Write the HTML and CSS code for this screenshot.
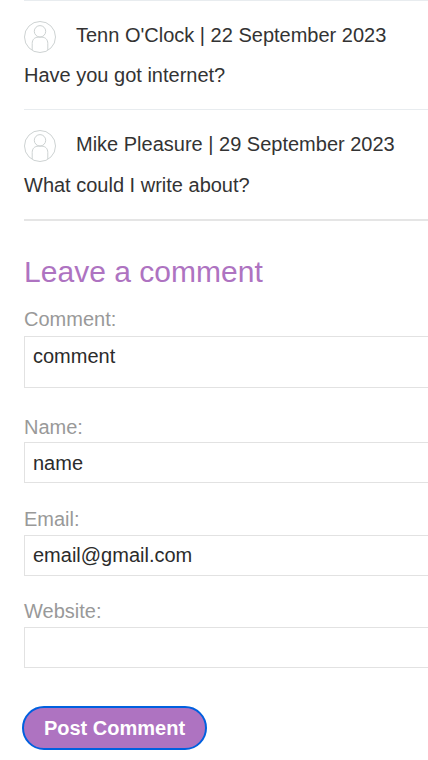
FILE: index.html
```html
<!DOCTYPE html>
<html lang="en">
<head>
<meta charset="utf-8">
<title>Leave a comment</title>
<link rel="stylesheet" href="styles.css">
</head>
<body>
<main>
  <article class="comment">
    <header class="meta">
      <svg class="avatar" viewBox="0 0 32 32"><circle cx="16" cy="16" r="15.5"/><circle cx="16" cy="10.300" r="5.700"/><path d="M8.200 29V22.500c0-4 2.500-6.300 6-6.300h3.600c3.500 0 6 2.300 6 6.300V29"/></svg>
      <span>Tenn O'Clock | 22 September 2023</span>
    </header>
    <p class="text">Have you got internet?</p>
  </article>
  <article class="comment comment-last">
    <header class="meta">
      <svg class="avatar" viewBox="0 0 32 32"><circle cx="16" cy="16" r="15.5"/><circle cx="16" cy="10.300" r="5.700"/><path d="M8.200 29V22.500c0-4 2.500-6.300 6-6.300h3.600c3.500 0 6 2.300 6 6.300V29"/></svg>
      <span>Mike Pleasure | 29 September 2023</span>
    </header>
    <p class="text">What could I write about?</p>
  </article>
  <form class="form">
    <h2>Leave a comment</h2>
    <label for="comment">Comment:</label>
    <textarea id="comment">comment</textarea>
    <label class="label-name" for="name">Name:</label>
    <input class="input-name" id="name" value="name">
    <label for="email">Email:</label>
    <input id="email" value="email@gmail.com">
    <label for="website">Website:</label>
    <input id="website">
    <button type="button">Post Comment</button>
  </form>
</main>
</body>
</html>
```
FILE: styles.css
```css
* { box-sizing: border-box; }
body {
  margin: 0;
  height: 760px;
  overflow: hidden;
  background: #fff;
  color: #333;
  font: 20px/24px "Liberation Sans", Arial, sans-serif;
}
main { padding-left: 24px; }
.comment { height: 109px; border-top: 1px solid #e8ecef; padding-top: 20px; }
.meta { display: flex; align-items: center; gap: 20px; height: 32px; }
.meta span { padding-bottom: 4px; }
.avatar { width: 32px; height: 32px; fill: none; stroke: #cdd2d2; stroke-width: 1; }
.text { margin: 10px 0 0; }
.comment-last .text { margin-top: 11px; }
.form { display: flex; flex-direction: column; border-top: 2px solid #e5e5e5; margin-top: 1px; padding-top: 34px; }
h2 { margin: 0 0 18px; color: #ae73c1; font-size: 30px; font-weight: 400; line-height: 34px; letter-spacing: 0.03px; }
label { color: #999; line-height: 24px; margin-bottom: 4px; }
input, textarea {
  width: 420px;
  height: 41px;
  margin: 0 0 23px;
  padding: 7px 8px;
  border: 1px solid #e2e2e2;
  border-radius: 0;
  background: #fff;
  color: #2b2b2b;
  font: inherit;
  outline: 0;
  resize: none;
}
textarea { height: 52px; margin: 1px 0 27px; overflow: hidden; }
.label-name { margin-bottom: 3px; }
.input-name { margin-bottom: 24px; padding: 8px 8px 6px; }
button {
  width: 185px;
  height: 44px;
  margin: 15px 0 0 -2px;
  padding: 0;
  border: 2px solid #0060df;
  border-radius: 22px;
  background: #ae73c1;
  color: #fff;
  font: bold 20px/24px "Liberation Sans", Arial, sans-serif;
}
```
